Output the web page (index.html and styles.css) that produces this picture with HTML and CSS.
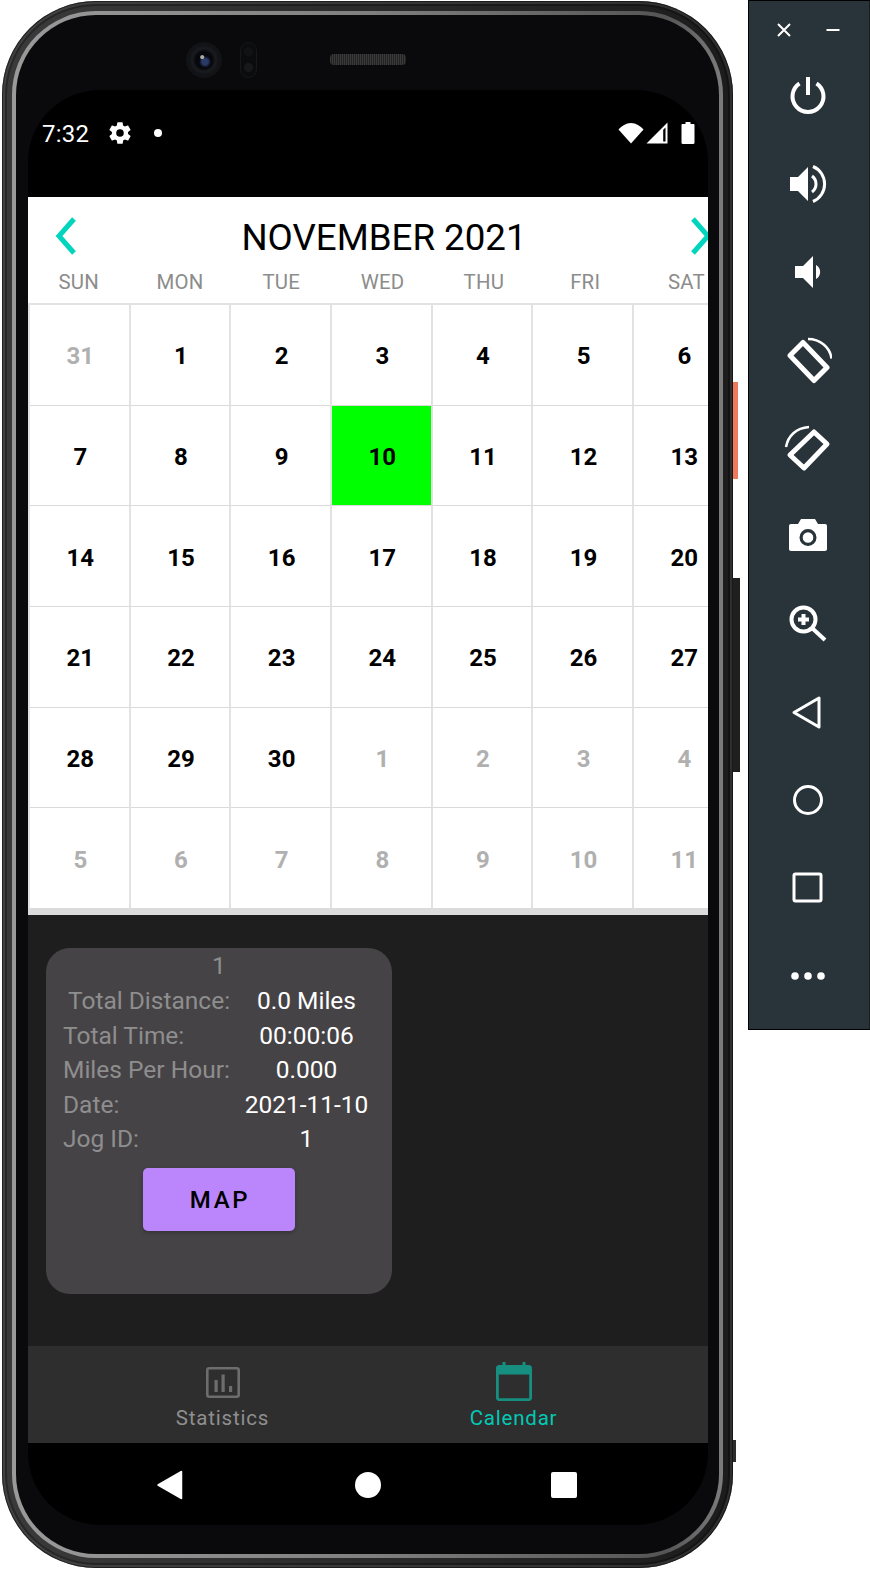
FILE: index.html
```html
<!DOCTYPE html>
<html lang="en">
<head>
<meta charset="utf-8">
<title>Jog calendar</title>
<link rel="stylesheet" href="styles.css">
</head>
<body>
<div class="device">
  <div class="phone">
    <div class="btn btn-power"></div>
    <div class="btn btn-volume"></div>
    <div class="btn btn-low"></div>
    <div class="ring"></div>
    <div class="earpiece">
      <div class="camera"></div>
      <div class="sensor"></div>
      <div class="speaker"></div>
    </div>
    <div class="screen">
      <div class="status">
        <span class="clock">7:32</span>
        <svg class="gear" viewBox="0 0 24 24"><path fill="#fff" d="M19.4 13c.04-.33.07-.66.07-1s-.03-.67-.07-1l2.1-1.65c.2-.15.25-.42.12-.64l-2-3.46c-.12-.22-.39-.3-.6-.22l-2.5 1c-.52-.4-1.08-.73-1.7-.98l-.37-2.65A.5.5 0 0 0 14 2h-4a.5.5 0 0 0-.49.42l-.38 2.65c-.6.25-1.17.59-1.69.98l-2.49-1c-.22-.09-.49 0-.61.22l-2 3.46c-.13.22-.07.49.12.64L4.57 11c-.04.33-.07.67-.07 1s.03.67.07 1l-2.11 1.65c-.19.15-.25.42-.12.64l2 3.46c.12.22.39.3.61.22l2.49-1c.52.4 1.08.73 1.69.98l.38 2.65c.03.24.24.42.49.42h4c.25 0 .46-.18.49-.42l.38-2.65c.61-.25 1.17-.59 1.69-.98l2.49 1c.23.09.49 0 .61-.22l2-3.46c.12-.22.07-.49-.12-.64L19.4 13zM12 15.5a3.5 3.5 0 1 1 0-7 3.5 3.5 0 0 1 0 7z"/></svg>
        <span class="dot"></span>
        <span class="status-right">
          <svg class="wifi" viewBox="0 0 26 22"><path fill="#fff" d="M13 21.500 .5 7.600C3.700 4 8 1 13 1s9.300 3 12.500 6.600z"/></svg>
          <svg class="signal" viewBox="0 0 22 22"><path fill="#fff" fill-rule="evenodd" d="M21.500 .5V21.500H.5zM19.500 5.500 17.200 7.800V19.500h2.300z"/></svg>
          <svg class="battery" viewBox="0 0 14 22"><path fill="#fff" d="M4.500 0h5v2h2.800c.8 0 1.200.5 1.200 1.200v17.600c0 .7-.4 1.200-1.200 1.200H1.700C.9 22 .5 21.500.5 20.800V3.200C.5 2.500.9 2 1.700 2h2.800z"/></svg>
        </span>
      </div>

      <div class="calendar">
        <div class="cal-head">
          <svg class="chev" viewBox="0 0 24 40"><path d="M20 3 5 20l15 17"/></svg>
          <div class="month">NOVEMBER 2021</div>
          <svg class="chev chev-right" viewBox="0 0 24 40"><path d="M4 3l15 17L4 37"/></svg>
        </div>
        <div class="weekdays">
          <span>SUN</span><span>MON</span><span>TUE</span><span>WED</span><span>THU</span><span>FRI</span><span>SAT</span>
        </div>
        <div class="days">
          <div class="day muted">31</div><div class="day">1</div><div class="day">2</div><div class="day">3</div><div class="day">4</div><div class="day">5</div><div class="day">6</div>
          <div class="day">7</div><div class="day">8</div><div class="day">9</div><div class="day picked">10</div><div class="day">11</div><div class="day">12</div><div class="day">13</div>
          <div class="day">14</div><div class="day">15</div><div class="day">16</div><div class="day">17</div><div class="day">18</div><div class="day">19</div><div class="day">20</div>
          <div class="day">21</div><div class="day">22</div><div class="day">23</div><div class="day">24</div><div class="day">25</div><div class="day">26</div><div class="day">27</div>
          <div class="day">28</div><div class="day">29</div><div class="day">30</div><div class="day muted">1</div><div class="day muted">2</div><div class="day muted">3</div><div class="day muted">4</div>
          <div class="day muted">5</div><div class="day muted">6</div><div class="day muted">7</div><div class="day muted">8</div><div class="day muted">9</div><div class="day muted">10</div><div class="day muted">11</div>
        </div>
      </div>

      <div class="content">
        <div class="card">
          <div class="card-num">1</div>
          <div class="stats">
            <span class="k k-first">Total Distance:</span><span class="v">0.0 Miles</span>
            <span class="k">Total Time:</span><span class="v">00:00:06</span>
            <span class="k">Miles Per Hour:</span><span class="v">0.000</span>
            <span class="k">Date:</span><span class="v">2021-11-10</span>
            <span class="k">Jog ID:</span><span class="v">1</span>
          </div>
          <div class="map-btn">MAP</div>
        </div>
      </div>

      <div class="tabs">
        <div class="tab">
          <svg class="tab-icon" viewBox="0 0 34 34"><rect x="1.300" y="3.300" width="31.400" height="28.400" rx="2" fill="none" stroke="#6d6d6d" stroke-width="2.600"/><path fill="#6d6d6d" d="M8.500 15h3.200v12H8.500zM15.500 9.500h3.200V27h-3.200zM23 21h3.200v6H23z"/></svg>
          <span>Statistics</span>
        </div>
        <div class="tab tab-active">
          <svg class="tab-icon tab-cal" viewBox="0 0 36 39"><path fill="#178f80" fill-rule="evenodd" d="M6.500 0h3v3h17V0h3v3H33c1.600 0 3 1.400 3 3v30c0 1.600-1.400 3-3 3H3c-1.600 0-3-1.400-3-3V6c0-1.600 1.400-3 3-3h3.500zM2.800 12.500v23.700h30.400V12.500z"/></svg>
          <span>Calendar</span>
        </div>
      </div>

      <div class="nav">
        <svg class="nav-back" viewBox="0 0 26 30"><path fill="#fff" d="M24.500 1.500V28.500L1 15z" stroke="#fff" stroke-linejoin="round" stroke-width="1.500"/></svg>
        <span class="nav-home"></span>
        <span class="nav-recent"></span>
      </div>
    </div>
  </div>
</div>

<aside class="toolbar">
  <div class="win-controls">
    <svg viewBox="0 0 16 16"><path d="M2 2l12 12M14 2 2 14"/></svg>
    <svg viewBox="0 0 16 16"><path d="M1.500 8h13"/></svg>
  </div>
  <div class="tools">
    <svg class="tool" viewBox="0 0 40 40"><path class="line" d="M20 1v18"/><path class="line" d="M11.500 7.500a15.500 15.500 0 1 0 17 0"/></svg>
    <svg class="tool" viewBox="0 0 40 40"><path class="fill" d="M2 13h8L20 3v34L10 27H2z"/><path class="line thin" d="M24 12a10 10 0 0 1 0 16"/><path class="line thin" d="M25 2.500a19 19 0 0 1 0 35"/></svg>
    <svg class="tool" viewBox="0 0 40 40"><path class="fill" d="M7 14h8L25 4v32L15 26H7z"/><path class="fill" d="M28 13a8 8 0 0 1 0 14z"/></svg>
    <svg class="tool tool-lg" viewBox="0 0 48 48"><path class="line phone-outline" d="M6 19.500 19 6.500l24 25L30 44.500z"/><path class="line thin2" d="M24 3C36 3 46 11 47.500 22.500"/></svg>
    <svg class="tool tool-lg" viewBox="0 0 48 48"><path class="line phone-outline" d="M6 31 30 8 43 20 20 44z"/><path class="line thin2" d="M2 23C4 12 12 4 25 3"/></svg>
    <svg class="tool" viewBox="0 0 40 40"><path fill="#fff" fill-rule="evenodd" d="M13 3h14l3 5h7c1.200 0 2 .8 2 2v23c0 1.200-.8 2-2 2H3c-1.200 0-2-.8-2-2V10c0-1.200.8-2 2-2h7zM20 13a8.500 8.500 0 1 0 0 17 8.500 8.500 0 0 0 0-17zm0 3.200a5.300 5.300 0 1 1 0 10.600 5.300 5.300 0 0 1 0-10.600z"/></svg>
    <svg class="tool" viewBox="0 0 40 40"><circle class="line" cx="15.500" cy="15.500" r="12" stroke-width="3.400"/><path class="line" d="M24 24l13 12" stroke-width="4"/><path class="line" d="M15.500 10v11M10 15.500h11" stroke-width="2.800"/></svg>
    <svg class="tool" viewBox="0 0 40 40"><path class="line outline" stroke-linejoin="round" d="M31 6v29L6 20.500z"/></svg>
    <svg class="tool" viewBox="0 0 40 40"><circle class="line outline" cx="20" cy="20" r="13.500"/></svg>
    <svg class="tool" viewBox="0 0 40 40"><rect class="line outline" x="6" y="6" width="27" height="27" rx="1.500"/></svg>
    <svg class="tool" viewBox="0 0 40 40"><circle fill="#fff" cx="7" cy="20" r="3.800"/><circle fill="#fff" cx="20" cy="20" r="3.800"/><circle fill="#fff" cx="33" cy="20" r="3.800"/></svg>
  </div>
</aside>
</body>
</html>
```

FILE: styles.css
```css
* { box-sizing: border-box; }
html, body { margin: 0; padding: 0; background: #fff; }
body {
  width: 870px;
  height: 1570px;
  overflow: hidden;
  display: flex;
  align-items: flex-start;
  font-family: Roboto, "Liberation Sans", sans-serif;
}

/* Device frame */
.device { width: 747px; padding: 1px 0 0 2px; flex: none; }
.phone {
  position: relative;
  width: 731px;
  height: 1567px;
  border-radius: 94px;
  background: linear-gradient(90deg, #3a3a3a 0, #2c2c2c 45%, #1c1c1c 100%);
  padding: 89px 25px 43px 26px;
  display: flex;
  flex-direction: column;
  box-shadow:
    inset 0 0 0 1px rgba(0, 0, 0, .5),
    inset 0 0 0 3px rgba(255, 255, 255, .12),
    inset 0 0 0 5px rgba(0, 0, 0, .3);
}
.ring {
  position: absolute;
  inset: 10px;
  border-radius: 84px;
  background: linear-gradient(90deg, #9a9a9a 0, #808080 50%, #555 92%, #7c7c7c 100%);
}
.ring::after {
  content: "";
  position: absolute;
  inset: 4px;
  border-radius: 80px;
  background: #0a090b;
}
.btn { position: absolute; }
.btn-power { left: 731px; top: 381px; width: 5px; height: 97px; background: #ee7a5e; }
.btn-volume { left: 731px; top: 577px; width: 7px; height: 194px; background: #1f1f1f; }
.btn-low { left: 731px; top: 1439px; width: 3px; height: 22px; background: #2d2d2d; }

.earpiece { position: absolute; left: 0; right: 0; top: 41px; height: 36px; }
.camera {
  position: absolute;
  left: 184px;
  top: 0;
  width: 36px;
  height: 36px;
  border-radius: 50%;
  background:
    radial-gradient(circle at 45% 42%, #aaa 0 1.500px, transparent 2.500px),
    radial-gradient(circle at 53% 55%, #2a3a66 0 3px, transparent 6px),
    radial-gradient(circle, #06070c 0 8px, #1b1c1f 12px, #131417 14px, #0e0f12 100%);
}
.sensor {
  position: absolute;
  left: 238px;
  top: 0;
  width: 17px;
  height: 36px;
  border-radius: 9px;
  border: 1px solid #17181b;
  background:
    radial-gradient(circle at 50% 26%, #111214 0 4px, transparent 5px),
    radial-gradient(circle at 50% 72%, #17181b 0 4px, transparent 5px),
    #0b0c0e;
}
.speaker {
  position: absolute;
  left: 328px;
  top: 12px;
  width: 76px;
  height: 11px;
  border-radius: 4px;
  background: repeating-linear-gradient(90deg, #3a3a3a 0 1px, #222 1px 2px);
}

/* Screen */
.screen {
  flex: 1;
  min-height: 0;
  position: relative;
  z-index: 1;
  width: 680px;
  border-radius: 72px;
  overflow: hidden;
  background: #000;
  display: flex;
  flex-direction: column;
}
.status {
  height: 107px;
  flex: none;
  padding: 25px 13px 0 14px;
  display: flex;
  align-items: flex-start;
  color: #fff;
}
.clock { font-size: 24px; line-height: 38px; width: 65px; letter-spacing: .2px; }
.gear { width: 26px; height: 26px; margin: 5px 0 0 0; flex: none; }
.dot { width: 8px; height: 8px; border-radius: 50%; background: #fff; margin: 14px 0 0 21px; }
.status-right { margin-left: auto; display: flex; align-items: flex-start; gap: 2px; padding-top: 7px; }
.wifi { width: 26px; height: 22px; }
.signal { width: 22px; height: 22px; }
.battery { width: 14px; height: 22px; margin-left: 11px; }

/* Calendar */
.calendar { flex: none; height: 712px; background: #fff; overflow: hidden; display: flex; flex-direction: column; }
.cal-head { flex: none; height: 66px; display: flex; align-items: flex-start; position: relative; padding-left: 26px; }
.chev { width: 24px; height: 40px; margin-top: 19px; flex: none; }
.chev path { fill: none; stroke: #03d4bd; stroke-width: 5; }
.chev-right { margin-left: auto; margin-right: -5px; }
.month {
  position: absolute;
  left: 0;
  right: -32px;
  top: 16px;
  text-align: center;
  font-size: 36.700px;
  line-height: 50px;
  color: #000;
}
.weekdays {
  flex: none;
  height: 40px;
  display: grid;
  grid-template-columns: repeat(7, 101.300px);
  width: 710px;
}
.weekdays span {
  text-align: center;
  color: #8c8c8c;
  font-size: 20.400px;
  letter-spacing: .2px;
  line-height: 38px;
}
.days {
  flex: none;
  display: grid;
  grid-template-columns: repeat(7, 100.670px);
  grid-auto-rows: 100.670px;
  width: 707px;
  border-top: 2px solid #e2e2e2;
  border-left: 2px solid #e2e2e2;
}
.day {
  display: flex;
  align-items: center;
  justify-content: center;
  padding: 3px 0 0 2px;
  font-weight: 700;
  font-size: 24px;
  color: #000;
  border-right: 2px solid #e2e2e2;
  border-bottom: 1px solid #dadada;
}
.day.muted { color: #b0b0b0; }
.day.picked { background: #00ff00; }

/* Jog list */
.content {
  flex: none;
  height: 437px;
  background: #1e1e1e;
  border-top: 6px solid #dcdcdc;
  padding: 33px 18px 0;
}
.card {
  width: 346px;
  height: 346px;
  border-radius: 24px;
  background: #464346;
  padding: 0 17px 0 17px;
  display: flex;
  flex-direction: column;
}
.card-num { text-align: center; font-size: 24.500px; line-height: 35px; color: #8e8e8e; }
.stats {
  display: grid;
  grid-template-columns: 175px 1fr;
  grid-auto-rows: 34.600px;
  margin-top: 1px;
  font-size: 24.500px;
  line-height: 34.600px;
}
.k { color: #8e8e8e; white-space: nowrap; }
.k-first { padding-left: 5px; }
.v { color: #fff; text-align: center; white-space: nowrap; }
.map-btn {
  align-self: center;
  margin-top: 11px;
  width: 152px;
  height: 63px;
  padding-left: 2px;
  border-radius: 5px;
  background: #bb86fc;
  color: #000;
  font-size: 24px;
  font-weight: 500;
  letter-spacing: 2.700px;
  line-height: 65px;
  text-align: center;
  box-shadow: 0 2px 4px rgba(0, 0, 0, .25);
}

/* Bottom tabs */
.tabs { flex: none; height: 97px; background: #2e2e2e; display: flex; padding-left: 49px; }
.tab {
  width: 291px;
  display: flex;
  flex-direction: column;
  align-items: center;
  justify-content: flex-end;
  color: #8f8f8f;
  font-size: 20.500px;
  letter-spacing: .8px;
  line-height: 30px;
  padding-bottom: 10px;
}
.tab-icon { width: 34px; height: 34px; margin-bottom: 4px; }
.tab-cal { width: 36px; height: 39px; margin-bottom: 2px; }
.tab-active { color: #03c9b4; }

.nav {
  flex: 1;
  min-height: 0;
  display: flex;
  align-items: flex-start;
  padding: 27px 0 0 129px;
}
.nav-back { width: 26px; height: 30px; flex: none; }
.nav-home { width: 26px; height: 26px; border-radius: 50%; background: #fff; margin: 2px 0 0 172px; flex: none; }
.nav-recent { width: 26px; height: 26px; border-radius: 2px; background: #fff; margin: 2px 0 0 170px; flex: none; }

/* Emulator toolbar */
.toolbar {
  flex: none;
  width: 122px;
  margin-left: 1px;
  height: 1030px;
  background: #29343a;
  border: 1px solid #000;
  border-right: 1px solid #1b1b1b;
  display: flex;
  flex-direction: column;
  align-items: center;
}
.win-controls { display: flex; align-self: stretch; justify-content: space-between; padding: 21px 28px 0 27px; height: 51px; flex: none; }
.win-controls svg { width: 16px; height: 16px; }
.win-controls path { stroke: #fff; stroke-width: 2; fill: none; }
.tools { display: grid; grid-auto-rows: 88px; justify-items: center; align-items: center; margin-right: 2px; }
.tool { width: 40px; height: 40px; display: block; }
.tool-lg { width: 48px; height: 48px; }
.tool .line { stroke: #fff; stroke-width: 4; fill: none; }
.tool .thin { stroke-width: 3; }
.tool .thin2 { stroke-width: 2.500; }
.tool .outline { stroke-width: 3; }
.tool .phone-outline { stroke-width: 5; stroke-linejoin: round; }
.tool .fill { fill: #fff; }
```
